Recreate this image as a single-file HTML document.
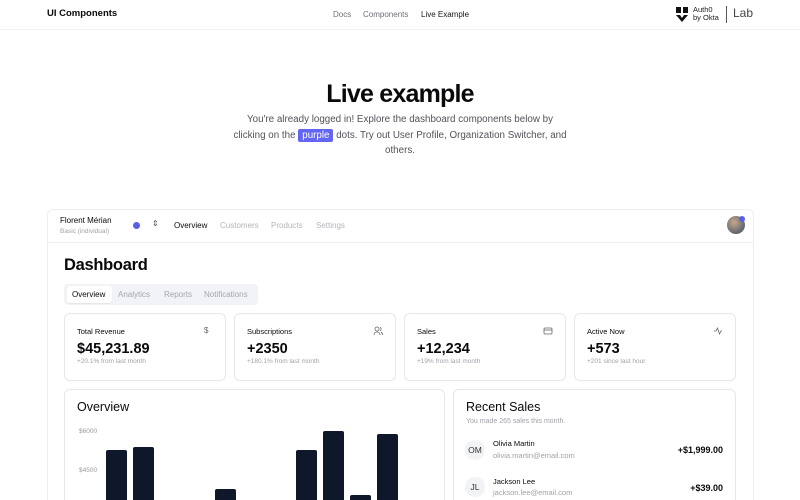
<!DOCTYPE html>
<html><head><meta charset="utf-8"><style>
*{box-sizing:border-box;margin:0;padding:0}
html,body{width:800px;height:500px;overflow:hidden}
body{background:#fff;font-family:"Liberation Sans",sans-serif;color:#09090b;position:relative}
.a{position:absolute;white-space:nowrap}
.hdr{position:absolute;left:0;top:0;width:800px;height:30px;border-bottom:1px solid #f1f1f3}
.muted{color:#a1a1aa}
.card{position:absolute;border:1px solid #e7e7ea;border-radius:6px;background:#fff}
.bar{position:absolute;width:21px;background:#0f172a;border-radius:2px 2px 0 0}
</style></head><body>
<div class="hdr"></div>
<div class="a" style="left:47px;top:8px;font-size:9.5px;font-weight:bold">UI Components</div>
<div class="a" style="left:333px;top:10px;font-size:8px;color:#71717a">Docs</div>
<div class="a" style="left:363px;top:10px;font-size:8px;color:#71717a">Components</div>
<div class="a" style="left:421px;top:10px;font-size:8px;color:#18181b">Live Example</div>
<svg class="a" style="left:675px;top:6px" width="14" height="17" viewBox="0 0 14 17"><path d="M1 1h5v6H1zM8 1h5v6H8zM1 9l6 7 6-7H9l-2 3-2-3z" fill="#111"/></svg>
<div class="a" style="left:693px;top:6px;font-size:7.5px;line-height:8px;color:#222">Auth0<br>by Okta</div>
<div class="a" style="left:726px;top:6px;width:1px;height:17px;background:#555"></div>
<div class="a" style="left:733px;top:6px;font-size:12px;color:#444">Lab</div>

<div class="a" style="left:0;width:800px;text-align:center;top:80px;font-size:25px;font-weight:bold;letter-spacing:-0.8px">Live example</div>
<div class="a" style="left:0;width:800px;text-align:center;top:112px;font-size:9.8px;line-height:15.5px;color:#52525b;white-space:normal">You're already logged in! Explore the dashboard components below by<br>clicking on the <span style="background:#6366f1;color:#fff;padding:1px 4px;border-radius:2px">purple</span> dots. Try out User Profile, Organization Switcher, and<br>others.</div>

<div class="card" style="left:47px;top:209px;width:707px;height:400px;border-color:#eceef0"></div>
<div class="a" style="left:47px;top:242px;width:707px;height:1px;background:#eceef0"></div>
<div class="a" style="left:60px;top:216px;font-size:8px">Florent Mérian</div>
<div class="a muted" style="left:60px;top:228px;font-size:6.5px">Basic (individual)</div>
<div class="a" style="left:133px;top:222px;width:7px;height:7px;border-radius:50%;background:#5b5ee6"></div>
<div class="a" style="left:152px;top:219px;font-size:8px;color:#555">⇕</div>
<div class="a" style="left:174px;top:221px;font-size:8px">Overview</div>
<div class="a" style="left:220px;top:221px;font-size:8px;color:#b4b4bb">Customers</div>
<div class="a" style="left:271px;top:221px;font-size:8px;color:#b4b4bb">Products</div>
<div class="a" style="left:316px;top:221px;font-size:8px;color:#b4b4bb">Settings</div>
<div class="a" style="left:727px;top:216px;width:18px;height:18px;border-radius:50%;background:radial-gradient(circle at 40% 35%,#c9a88a,#5d6670 70%)"></div>
<div class="a" style="left:739px;top:216px;width:6px;height:6px;border-radius:50%;background:#5b5ee6"></div>

<div class="a" style="left:64px;top:256px;font-size:16.5px;font-weight:bold;letter-spacing:-0.3px">Dashboard</div>
<div class="a" style="left:64px;top:284px;width:194px;height:21px;background:#f1f3f6;border-radius:4px"></div>
<div class="a" style="left:67px;top:286px;width:45px;height:17px;background:#fff;border-radius:3px;box-shadow:0 1px 1px rgba(0,0,0,.06)"></div>
<div class="a" style="left:72px;top:290px;font-size:8px">Overview</div>
<div class="a" style="left:118px;top:290px;font-size:8px;color:#a6a6ae">Analytics</div>
<div class="a" style="left:164px;top:290px;font-size:8px;color:#a6a6ae">Reports</div>
<div class="a" style="left:204px;top:290px;font-size:8px;color:#a6a6ae">Notifications</div>

<div class="card" style="left:64px;top:313px;width:162px;height:68px"></div>
<div class="card" style="left:234px;top:313px;width:162px;height:68px"></div>
<div class="card" style="left:404px;top:313px;width:162px;height:68px"></div>
<div class="card" style="left:574px;top:313px;width:162px;height:68px"></div>
<div class="a" style="left:77px;top:327px;font-size:7.5px">Total Revenue</div>
<div class="a" style="left:204px;top:326px;font-size:8px;color:#666">$</div>
<div class="a" style="left:77px;top:341px;font-size:14.5px;font-weight:bold">$45,231.89</div>
<div class="a muted" style="left:77px;top:358px;font-size:6.5px">+20.1% from last month</div>
<div class="a" style="left:247px;top:327px;font-size:7.5px">Subscriptions</div>
<svg class="a" style="left:373px;top:326px" width="10" height="10" viewBox="0 0 10 10" fill="none" stroke="#666" stroke-width=".8"><circle cx="4" cy="3" r="2"/><path d="M1 9c0-2 1.5-3 3-3s3 1 3 3M7 1.2a2 2 0 010 3.6M8 6c1 .5 1.5 1.5 1.5 3"/></svg>
<div class="a" style="left:247px;top:341px;font-size:14.5px;font-weight:bold">+2350</div>
<div class="a muted" style="left:247px;top:358px;font-size:6.5px">+180.1% from last month</div>
<div class="a" style="left:417px;top:327px;font-size:7.5px">Sales</div>
<svg class="a" style="left:543px;top:326px" width="10" height="10" viewBox="0 0 10 10" fill="none" stroke="#666" stroke-width=".8"><rect x="1" y="2" width="8" height="6" rx="1"/><path d="M1 4h8"/></svg>
<div class="a" style="left:417px;top:341px;font-size:14.5px;font-weight:bold">+12,234</div>
<div class="a muted" style="left:417px;top:358px;font-size:6.5px">+19% from last month</div>
<div class="a" style="left:587px;top:327px;font-size:7.5px">Active Now</div>
<svg class="a" style="left:713px;top:326px" width="10" height="10" viewBox="0 0 10 10" fill="none" stroke="#666" stroke-width=".8"><path d="M1 5h2l1.5-3 2 6L8 5h1"/></svg>
<div class="a" style="left:587px;top:341px;font-size:14.5px;font-weight:bold">+573</div>
<div class="a muted" style="left:587px;top:358px;font-size:6.5px">+201 since last hour</div>

<div class="card" style="left:64px;top:389px;width:381px;height:200px"></div>
<div class="card" style="left:453px;top:389px;width:283px;height:200px"></div>
<div class="a" style="left:77px;top:400px;font-size:12.5px">Overview</div>
<div class="a" style="left:79px;top:428px;font-size:6.5px;color:#999">$6000</div>
<div class="a" style="left:79px;top:467px;font-size:6.5px;color:#999">$4500</div>
<div class="bar" style="left:106px;top:450px;height:80px"></div>
<div class="bar" style="left:133px;top:447px;height:80px"></div>
<div class="bar" style="left:215px;top:489px;height:40px"></div>
<div class="bar" style="left:296px;top:450px;height:80px"></div>
<div class="bar" style="left:323px;top:431px;height:90px"></div>
<div class="bar" style="left:350px;top:495px;height:30px"></div>
<div class="bar" style="left:377px;top:434px;height:90px"></div>
<div class="a" style="left:466px;top:400px;font-size:12.5px">Recent Sales</div>
<div class="a muted" style="left:466px;top:418px;font-size:7px">You made 265 sales this month.</div>
<div class="a" style="left:465px;top:440px;width:20px;height:20px;border-radius:50%;background:#f1f3f6;font-size:8.5px;text-align:center;line-height:20px;color:#333">OM</div>
<div class="a" style="left:493px;top:439px;font-size:7.5px">Olivia Martin</div>
<div class="a muted" style="left:493px;top:451px;font-size:7.5px">olivia.martin@email.com</div>
<div class="a" style="left:650px;top:445px;width:73px;text-align:right;font-size:9px;font-weight:bold">+$1,999.00</div>
<div class="a" style="left:465px;top:477px;width:20px;height:20px;border-radius:50%;background:#f1f3f6;font-size:8.5px;text-align:center;line-height:20px;color:#333">JL</div>
<div class="a" style="left:493px;top:477px;font-size:7.5px">Jackson Lee</div>
<div class="a muted" style="left:493px;top:488px;font-size:7.5px">jackson.lee@email.com</div>
<div class="a" style="left:650px;top:483px;width:73px;text-align:right;font-size:9px;font-weight:bold">+$39.00</div>
</body></html>
